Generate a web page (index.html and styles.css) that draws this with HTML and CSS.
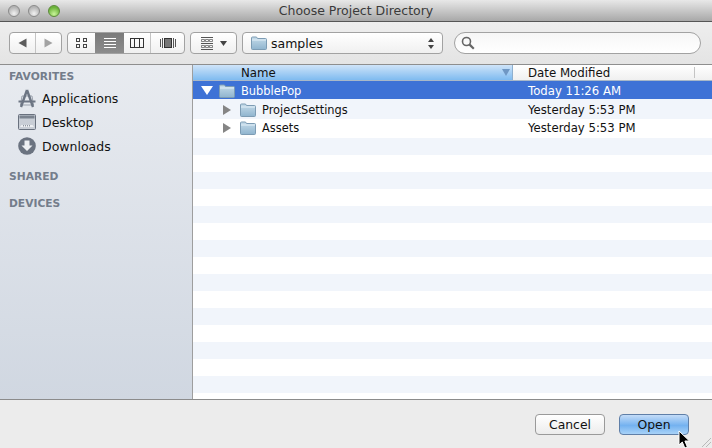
FILE: index.html
```html
<!DOCTYPE html>
<html lang="en">
<head>
    <meta charset="UTF-8">
    <title>Choose Project Directory</title>
    <link rel="stylesheet" href="styles.css">
</head>
<body>
    <svg class="defs" width="0" height="0">
        <defs>
            <linearGradient id="folder-fill" x1="0" y1="0" x2="0" y2="1">
                <stop offset="0" stop-color="#c6dcea"/>
                <stop offset="1" stop-color="#8fb4ce"/>
            </linearGradient>
            <symbol id="folder" viewBox="0 0 16 14">
                <path d="M0.5 2 Q0.5 1 1.5 1 H5.5 L6.5 2.5 H14.5 Q15.5 2.5 15.5 3.5 V12.5 Q15.5 13.5 14.5 13.5 H1.5 Q0.5 13.5 0.5 12.5 Z" fill="url(#folder-fill)" stroke="#7d9cb4"/>
                <path d="M1 4 H15" stroke="#e2eff7" fill="none"/>
            </symbol>
        </defs>
    </svg>

    <div class="titlebar">
        <div class="lights">
            <span class="light"></span>
            <span class="light"></span>
            <span class="light green"></span>
        </div>
        <div class="title">Choose Project Directory</div>
    </div>

    <div class="toolbar">
        <div class="seg nav-seg">
            <div class="seg-item nav-item">
                <svg width="9" height="10" viewBox="0 0 9 10"><path d="M8.5 0.5 V9.5 L0.5 5 Z" fill="#5c5c5c"/></svg>
            </div>
            <div class="seg-item nav-item">
                <svg width="9" height="10" viewBox="0 0 9 10"><path d="M0.5 0.5 V9.5 L8.5 5 Z" fill="#a3a3a3"/></svg>
            </div>
        </div>

        <div class="seg view-seg">
            <div class="seg-item view-item">
                <svg width="11" height="10" viewBox="0 0 11 10" fill="none" stroke="#444"><rect x="0.5" y="0.5" width="3" height="3"/><rect x="7.5" y="0.5" width="3" height="3"/><rect x="0.5" y="6.5" width="3" height="3"/><rect x="7.5" y="6.5" width="3" height="3"/></svg>
            </div>
            <div class="seg-item view-item active">
                <svg width="12" height="11" viewBox="0 0 12 11" stroke="#fff"><path d="M0 0.5 H12 M0 3.5 H12 M0 6.5 H12 M0 9.5 H12"/></svg>
            </div>
            <div class="seg-item view-item columns">
                <svg width="14" height="10" viewBox="0 0 14 10" fill="none" stroke="#333"><rect x="0.5" y="0.5" width="13" height="9"/><path d="M4.5 0 V10 M9.5 0 V10"/></svg>
            </div>
            <div class="seg-item view-item">
                <svg width="16" height="10" viewBox="0 0 16 10"><path d="M0.5 1 V9 M2.5 0 V10 M13.5 0 V10 M15.5 1 V9" stroke="#555" fill="none"/><rect x="4.5" y="0.5" width="7" height="9" fill="#777" stroke="#333"/></svg>
            </div>
        </div>

        <div class="seg arrange-seg">
            <svg width="12" height="13" viewBox="0 0 12 13" fill="none" stroke="#555"><path d="M0 0.5 H12 M0 6.5 H12 M0 12.5 H12"/><path d="M0.5 2.5 H3.5 V4.5 H0.5 Z M4.5 2.5 H7.5 V4.5 H4.5 Z M8.5 2.5 H11.5 V4.5 H8.5 Z M0.5 8.5 H3.5 V10.5 H0.5 Z M4.5 8.5 H7.5 V10.5 H4.5 Z M8.5 8.5 H11.5 V10.5 H8.5 Z" stroke-width="0.7"/></svg>
            <svg width="7" height="5" viewBox="0 0 7 5"><path d="M0 0 H7 L3.5 5 Z" fill="#444"/></svg>
        </div>

        <div class="seg path-popup">
            <svg class="path-folder" width="16" height="14"><use href="#folder"/></svg>
            <span class="path-label">samples</span>
            <svg class="updown" width="6" height="11" viewBox="0 0 6 11"><path d="M3 0 L6 4 H0 Z M3 11 L6 7 H0 Z" fill="#444"/></svg>
        </div>

        <div class="search">
            <svg width="14" height="14" viewBox="0 0 14 14" fill="none" stroke="#666"><circle cx="5.5" cy="5.5" r="4" stroke-width="1.6"/><path d="M8.6 8.6 L12.8 12.8" stroke-width="2.2"/></svg>
        </div>
    </div>

    <div class="main">
        <aside class="sidebar">
            <h2 class="side-head first">FAVORITES</h2>
            <div class="side-item">
                <svg width="18" height="19" viewBox="0 0 18 19" fill="none"><path d="M4 7 H14 L15.5 16 H2.5 Z" stroke="#9aa1ac"/><path d="M9 1 L3 18 M9 1 L15 18" stroke="#6c7583" stroke-width="2.4"/><path d="M0.5 12.5 H17.5" stroke="#6c7583" stroke-width="2"/></svg>
                <span>Applications</span>
            </div>
            <div class="side-item">
                <svg width="18" height="16" viewBox="0 0 18 16"><rect x="0.5" y="0.5" width="17" height="15" rx="1" fill="#c9ced6" stroke="#69717e"/><rect x="1.5" y="1.5" width="15" height="3" fill="#7b838f"/><path d="M2 13 L3.5 11 H14.5 L16 13 Z" fill="#eef0f3"/><path d="M5 11.8 H13" stroke="#69717e" stroke-dasharray="1 1"/></svg>
                <span>Desktop</span>
            </div>
            <div class="side-item">
                <svg width="18" height="18" viewBox="0 0 18 18"><circle cx="9" cy="9" r="8.8" fill="#6b7380"/><path d="M6.5 3.5 H11.5 V8.5 H14.5 L9 14 L3.5 8.5 H6.5 Z" fill="#eef0f3"/></svg>
                <span>Downloads</span>
            </div>
            <h2 class="side-head shared">SHARED</h2>
            <h2 class="side-head devices">DEVICES</h2>
        </aside>

        <section class="browser">
            <div class="header">
                <div class="col-name sorted">
                    <span>Name</span>
                    <svg width="8" height="7" viewBox="0 0 8 7"><path d="M0 0 H8 L4 7 Z" fill="#6f97c4"/></svg>
                </div>
                <div class="col-date"><span>Date Modified</span></div>
            </div>
            <div class="rows">
                <div class="row selected">
                    <div class="row-name">
                        <svg class="disclosure" width="12" height="9" viewBox="0 0 12 9"><path d="M0 0 H12 L6 9 Z" fill="#fff"/></svg>
                        <svg class="icon" width="16" height="14"><use href="#folder"/></svg>
                        <span>BubblePop</span>
                    </div>
                    <span class="row-date">Today 11:26 AM</span>
                </div>
                <div class="row child tall">
                    <div class="row-name">
                        <svg class="disclosure" width="8" height="10" viewBox="0 0 8 10"><path d="M0 0 V10 L8 5 Z" fill="#858585"/></svg>
                        <svg class="icon" width="16" height="14"><use href="#folder"/></svg>
                        <span>ProjectSettings</span>
                    </div>
                    <span class="row-date">Yesterday 5:53 PM</span>
                </div>
                <div class="row child mid">
                    <div class="row-name">
                        <svg class="disclosure" width="8" height="10" viewBox="0 0 8 10"><path d="M0 0 V10 L8 5 Z" fill="#858585"/></svg>
                        <svg class="icon" width="16" height="14"><use href="#folder"/></svg>
                        <span>Assets</span>
                    </div>
                    <span class="row-date">Yesterday 5:53 PM</span>
                </div>
                <div class="row stripe"></div>
                <div class="row"></div>
                <div class="row stripe"></div>
                <div class="row"></div>
                <div class="row stripe"></div>
                <div class="row"></div>
                <div class="row stripe"></div>
                <div class="row"></div>
                <div class="row stripe"></div>
                <div class="row"></div>
                <div class="row stripe"></div>
                <div class="row"></div>
                <div class="row stripe"></div>
                <div class="row"></div>
                <div class="row stripe"></div>
            </div>
        </section>
    </div>

    <div class="bottombar">
        <button class="btn">Cancel</button>
        <button class="btn primary">Open</button>
    </div>

    <svg class="resize-grip" width="10" height="10" viewBox="0 0 10 10" stroke="#b9b9b9"><path d="M10 1 L1 10 M10 5 L5 10"/></svg>

    <svg class="cursor" width="13" height="19" viewBox="0 0 13 19"><path d="M1 1 V15 L4.3 12 L6.8 18 L9.4 17 L6.9 11 H11.5 Z" fill="#000" stroke="#fff"/></svg>
</body>
</html>
```

FILE: styles.css
```css
* {
    box-sizing: border-box;
}

html, body {
    margin: 0;
    padding: 0;
}

body {
    position: relative;
    width: 712px;
    height: 448px;
    overflow: hidden;
    font-family: "DejaVu Sans", sans-serif;
    font-size: 12px;
    color: #111;
    background-color: #ececec;
}

.defs {
    position: absolute;
}

/* title bar */
.titlebar {
    position: relative;
    height: 22px;
    background: linear-gradient(#e8e8e8, #a8a8a8);
    border-bottom: 1px solid #565656;
}

.lights {
    display: flex;
    gap: 8px;
    padding: 5px 0 0 8px;
}

.light {
    width: 12px;
    height: 12px;
    border-radius: 50%;
    border: 1px solid #8a8a8a;
    background: radial-gradient(circle at 50% 75%, #f2f2f2, #b4b4b4 70%);
}

.light.green {
    border-color: #5c8a3a;
    background: radial-gradient(circle at 50% 80%, #c9f59a, #6cb33a 70%);
}

.title {
    position: absolute;
    top: 3px;
    left: 0;
    right: 0;
    text-align: center;
    font-size: 12.5px;
    line-height: 16px;
    color: #3a3a3a;
}

/* toolbar */
.toolbar {
    display: flex;
    align-items: flex-start;
    height: 43px;
    padding: 10px 0 0 9px;
    background: linear-gradient(#eeeeee, #e4e4e4);
    border-bottom: 1px solid #8e8e8e;
}

.seg {
    display: flex;
    height: 22px;
    border: 1px solid #a2a2a2;
    border-radius: 4px;
    background: linear-gradient(#ffffff, #f0f0f0);
    overflow: hidden;
}

.seg-item {
    display: flex;
    align-items: center;
    justify-content: center;
}

.nav-seg {
    width: 53px;
}

.nav-item {
    flex: 1;
}

.nav-item:first-child {
    border-right: 1px solid #c4c4c4;
}

.view-seg {
    width: 118px;
    margin-left: 5px;
}

.view-item {
    width: 27px;
}

.view-item:last-child {
    flex: 1;
    border-left: 1px solid #c4c4c4;
}

.view-item.active {
    width: 29px;
    background: linear-gradient(#7a7a7a, #8c8c8c);
}

.view-item.columns {
    width: 26px;
}

.arrange-seg {
    align-items: center;
    justify-content: center;
    gap: 7px;
    width: 47px;
    margin-left: 5px;
}

.path-popup {
    align-items: center;
    width: 201px;
    margin-left: 5px;
    padding-left: 8px;
}

.path-label {
    flex: 1;
    margin-left: 4px;
    font-size: 12.5px;
}

.updown {
    margin-right: 8px;
}

.search {
    display: flex;
    align-items: center;
    width: 247px;
    height: 22px;
    margin-left: 11px;
    padding-left: 6px;
    border: 1px solid #a2a2a2;
    border-radius: 11px;
    background: linear-gradient(#f6f6f6, #ffffff);
}

/* main area */
.main {
    display: flex;
    height: 335px;
    border-bottom: 1px solid #8b8b8b;
}

.sidebar {
    width: 193px;
    padding-top: 5px;
    background: linear-gradient(#e8ebf0, #d0d7e1);
    border-right: 1px solid #9e9e9e;
}

.side-head {
    margin: 0;
    padding-left: 9px;
    font-size: 10.7px;
    line-height: 14px;
    font-weight: bold;
    color: #747d8b;
}

.side-head.first {
    margin-bottom: 2px;
}

.side-head.shared {
    margin-top: 12px;
}

.side-head.devices {
    margin-top: 13px;
}

.side-item {
    display: flex;
    align-items: center;
    height: 24px;
    padding-left: 18px;
    font-size: 12.5px;
}

.side-item svg {
    flex: none;
}

.side-item span {
    margin-left: 6px;
}

.browser {
    flex: 1;
    overflow: hidden;
    background-color: #fff;
}

.header {
    display: flex;
    height: 16px;
    border-bottom: 1px solid #a9b8c8;
    font-size: 11.8px;
    line-height: 16px;
}

.col-name {
    display: flex;
    justify-content: space-between;
    align-items: center;
    width: 320px;
    padding: 0 2px 0 48px;
    background: linear-gradient(#cfe4f9, #7fbbf0);
    border-right: 1px solid #8fb0cf;
}

.col-date {
    flex: 1;
    padding-left: 15px;
    background: linear-gradient(#ffffff, #f0f0f0);
    position: relative;
}

.col-date::after {
    content: "";
    position: absolute;
    top: 2px;
    bottom: 2px;
    left: 181px;
    border-left: 1px solid #c4c4c4;
}

.row {
    display: flex;
    align-items: center;
    height: 17px;
    font-size: 11.7px;
}

.row.stripe,
.row.tall {
    background-color: #f1f5fb;
}

.row.selected {
    height: 18px;
    padding-top: 1px;
    color: #fff;
    background-color: #3e72d6;
}

.row.tall {
    height: 20px;
    padding-top: 1px;
}

.row.mid {
    height: 19px;
    padding-bottom: 1px;
}

.row-name {
    display: flex;
    align-items: center;
    width: 335px;
    padding-left: 8px;
    font-size: 11.4px;
}

.row.child .row-name {
    padding-left: 30px;
}

.icon {
    margin-left: 6px;
    margin-right: 6px;
}

.row.child .icon {
    margin-left: 9px;
}

/* bottom bar */
.bottombar {
    display: flex;
    justify-content: flex-end;
    gap: 14px;
    height: 48px;
    padding: 14px 23px 0 0;
}

.btn {
    width: 70px;
    height: 21px;
    padding: 0;
    font-family: inherit;
    font-size: 12.4px;
    color: #111;
    border: 1px solid #9a9a9a;
    border-radius: 4px;
    background: linear-gradient(#ffffff, #ececec);
}

.btn.primary {
    border-color: #5f7fa8;
    background: linear-gradient(#c4dcf8, #74b2f0 55%, #a8d2f8);
}

.resize-grip {
    position: absolute;
    right: 1px;
    bottom: 1px;
}

.cursor {
    position: absolute;
    left: 678px;
    top: 430px;
}
```
